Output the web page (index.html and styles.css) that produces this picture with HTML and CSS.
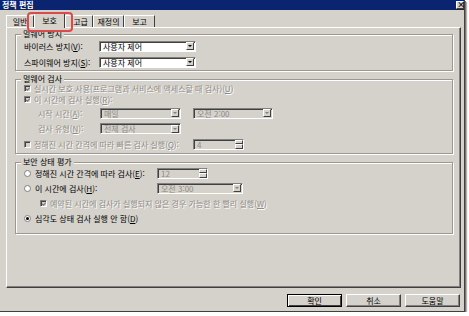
FILE: index.html
```html
<!DOCTYPE html>
<html lang="ko">
<head>
    <meta charset="UTF-8">
    <title>정책 편집</title>
    <link rel="stylesheet" href="styles.css">
</head>
<body>
    <div class="window">
        <div class="titlebar">
            <span class="title">정책 편집</span>
            <span class="close">×</span>
        </div>

        <div class="tabs">
            <div class="tab t-general">일반</div>
            <div class="tab active">보호</div>
            <div class="tab t-adv">고급</div>
            <div class="tab t-over">재정의</div>
            <div class="tab t-report">보고</div>
        </div>

        <div class="panel">
            <fieldset class="group g1">
                <legend>멀웨어 방지</legend>
                <div class="row h16">
                    <label class="cell w75">바이러스 방지(<u>V</u>):</label>
                    <div class="select w97"><span>사용자 제어</span><span class="drop"></span></div>
                </div>
                <div class="row h16">
                    <label class="cell w75">스파이웨어 방지(<u>S</u>):</label>
                    <div class="select w97"><span>사용자 제어</span><span class="drop"></span></div>
                </div>
            </fieldset>

            <fieldset class="group g2">
                <legend>멀웨어 검사</legend>
                <div class="row h10 off">
                    <span class="chk on"><svg viewBox="0 0 7 7"><path d="M1.3 3.3 L2.8 4.8 L5.6 1.8"/></svg></span>
                    <label>실시간 보호 사용(프로그램과 서비스에 액세스할 때 검사)(<u>U</u>)</label>
                </div>
                <div class="row h12 off">
                    <span class="chk on"><svg viewBox="0 0 7 7"><path d="M1.3 3.3 L2.8 4.8 L5.6 1.8"/></svg></span>
                    <label>이 시간에 검사 실행(<u>R</u>):</label>
                </div>
                <div class="row h16 off indent">
                    <label class="cell w62">시작 시간(<u>A</u>):</label>
                    <div class="select w81 dis"><span>매일</span><span class="drop"></span></div>
                    <div class="select w80 dis gap12"><span>오전 2:00</span><span class="drop"></span></div>
                </div>
                <div class="row h15 off indent">
                    <label class="cell w62">검사 유형(<u>N</u>):</label>
                    <div class="select w81 dis"><span>전체 검사</span><span class="drop"></span></div>
                </div>
                <div class="row h16 off">
                    <div class="cell w169">
                        <span class="chk"></span>
                        <label>정해진 시간 간격에 따라 빠른 검사 실행(<u>Q</u>):</label>
                    </div>
                    <div class="spin w51 dis"><span>4</span><span class="updown"><i></i><i></i></span></div>
                </div>
            </fieldset>

            <fieldset class="group g3">
                <legend>보안 상태 평가</legend>
                <div class="row h14">
                    <div class="cell w133">
                        <span class="radio"></span>
                        <label>정해진 시간 간격에 따라 검사(<u>E</u>):</label>
                    </div>
                    <div class="spin w51 dis"><span>12</span><span class="updown"><i></i><i></i></span></div>
                </div>
                <div class="row h16">
                    <div class="cell w133">
                        <span class="radio"></span>
                        <label>이 시간에 검사(<u>H</u>):</label>
                    </div>
                    <div class="select w86 dis"><span>오전 3:00</span><span class="drop"></span></div>
                </div>
                <div class="row h15 off indent2">
                    <span class="chk on"><svg viewBox="0 0 7 7"><path d="M1.3 3.3 L2.8 4.8 L5.6 1.8"/></svg></span>
                    <label>예약된 시간에 검사가 실행되지 않은 경우 가능한 한 빨리 실행(<u>W</u>)</label>
                </div>
                <div class="row h15">
                    <span class="radio on"></span>
                    <label>심각도 상태 검사 실행 안 함(<u>D</u>)</label>
                </div>
            </fieldset>
        </div>

        <div class="buttons">
            <button class="default">확인</button>
            <button>취소</button>
            <button>도움말</button>
        </div>
    </div>
</body>
</html>
```

FILE: styles.css
```css
body {
    margin: 0;
    background: #fff;
    font-family: "Noto Sans CJK KR", "DejaVu Sans", sans-serif;
    font-size: 8px;
    color: #000;
}
.window {
    width: 465px;
    height: 312px;
    box-sizing: border-box;
    background: #d5d2cc;
    border-right: 1px solid #404040;
    border-bottom: 1px solid #404040;
    box-shadow: 1px 1px 0 #7a7772, 2px 2px 1px #b5b2ad;
    display: flex;
    flex-direction: column;
}
.titlebar {
    height: 10px;
    background: #0b2470;
    display: flex;
    justify-content: space-between;
    align-items: center;
    padding: 0 0 0 2px;
}
.title {
    color: #fff;
    font-weight: bold;
    line-height: 10px;
}
.close {
    width: 8px;
    height: 8px;
    box-sizing: border-box;
    background: #d5d2cc;
    border: 1px solid;
    border-color: #fff #404040 #404040 #fff;
    font-size: 8px;
    line-height: 5px;
    text-align: center;
    font-weight: bold;
}

/* tabs */
.tabs {
    height: 17px;
    display: flex;
    align-items: flex-end;
    padding-left: 6px;
}
.tab {
    height: 12px;
    box-sizing: border-box;
    line-height: 11px;
    text-align: center;
    border-top: 1px solid #fff;
    border-left: 1px solid #fff;
    border-right: 1px solid #404040;
}
.t-general { width: 28px; }
.t-adv { width: 28px; padding-left: 3px; }
.t-over { width: 31px; }
.t-report { width: 31px; }
.tab.active {
    width: 31px;
    height: 15px;
    line-height: 13px;
    position: relative;
    margin-bottom: -1px;
    background: #d5d2cc;
    z-index: 1;
}
.tab.active::after {
    content: "";
    position: absolute;
    left: -8px;
    right: -9px;
    top: -2px;
    bottom: -4px;
    border: 2px solid #dc4b4b;
    border-radius: 4px;
}

/* panel */
.panel {
    width: 455px;
    height: 261px;
    box-sizing: border-box;
    margin-left: 6px;
    border: 1px solid;
    border-color: #fff #404040 #404040 #fff;
    box-shadow: inset -1px -1px 0 #808080;
    padding: 2px 0 0 8px;
}
.group {
    width: 438px;
    box-sizing: border-box;
    margin: 0 0 4px 0;
    padding: 0 0 0 8px;
    border: 1px solid #9c9891;
    box-shadow: 1px 1px 0 #fff, inset 1px 1px 0 #fff;
}
.group legend {
    padding: 0 2px;
    margin-left: -3px;
    line-height: 8px;
    background: #d5d2cc;
}
.g2 { padding-bottom: 1px; }
.g3 { padding-bottom: 7px; }

.row {
    display: flex;
    align-items: center;
}
.h10 { height: 10px; }
.h12 { height: 12px; }
.h14 { height: 14px; }
.h15 { height: 15px; }
.h16 { height: 16px; }
.indent { padding-left: 14px; }
.indent2 { padding-left: 16px; }
.cell {
    display: flex;
    align-items: center;
    flex-shrink: 0;
}
.w62 { width: 62px; }
.w75 { width: 75px; }
.w133 { width: 133px; }
.w169 { width: 169px; }
.off label,
.off .cell label {
    color: #8e8b85;
    text-shadow: 1px 1px 0 #fff;
}

/* inputs */
.select,
.spin {
    height: 11px;
    box-sizing: border-box;
    background: #fff;
    border: 1px solid;
    border-color: #808080 #fff #fff #808080;
    box-shadow: inset 1px 1px 0 #404040;
    display: flex;
    align-items: center;
    justify-content: space-between;
    padding-left: 3px;
    line-height: 9px;
}
.w51 { width: 51px; }
.w80 { width: 80px; }
.w81 { width: 81px; }
.w86 { width: 86px; }
.w97 { width: 97px; }
.gap12 { margin-left: 12px; }
.select.dis,
.spin.dis {
    background: #d5d2cc;
    color: #8e8b85;
}
.drop {
    width: 8px;
    height: 8px;
    margin-right: 1px;
    box-sizing: border-box;
    background: #d5d2cc;
    border: 1px solid;
    border-color: #fff #404040 #404040 #fff;
    display: flex;
    align-items: center;
    justify-content: center;
}
.drop::after {
    content: "";
    border-left: 2px solid transparent;
    border-right: 2px solid transparent;
    border-top: 2px solid #000;
}
.dis .drop::after {
    border-top-color: #808080;
}
.updown {
    width: 8px;
    height: 9px;
    display: flex;
    flex-direction: column;
}
.updown i {
    flex: 1;
    background: #d5d2cc;
    border: 1px solid;
    border-color: #fff #404040 #404040 #fff;
    box-sizing: border-box;
}

.chk {
    width: 7px;
    height: 7px;
    flex-shrink: 0;
    box-sizing: border-box;
    margin-right: 3px;
    background: #fff;
    border: 1px solid;
    border-color: #808080 #fff #fff #808080;
    box-shadow: inset 1px 1px 0 #404040;
}
.off .chk {
    background: #d5d2cc;
}
.chk svg {
    display: block;
    width: 6px;
    height: 6px;
}
.chk path {
    fill: none;
    stroke: #777;
    stroke-width: 1.3;
}
.radio {
    width: 7px;
    height: 7px;
    flex-shrink: 0;
    box-sizing: border-box;
    margin-right: 4px;
    border-radius: 50%;
    background: #fff;
    border: 1px solid #808080;
    display: flex;
    align-items: center;
    justify-content: center;
}
.radio.on::after {
    content: "";
    width: 3px;
    height: 3px;
    border-radius: 50%;
    background: #000;
}

/* bottom buttons */
.buttons {
    display: flex;
    justify-content: flex-end;
    gap: 4px;
    padding: 6px 4px 0 0;
}
.buttons button {
    width: 55px;
    height: 13px;
    padding: 0;
    font-family: inherit;
    font-size: 8px;
    line-height: 9px;
    background: #d5d2cc;
    border: 1px solid;
    border-color: #fff #404040 #404040 #fff;
    box-shadow: inset -1px -1px 0 #808080;
}
.buttons button.default {
    border-color: #000;
    box-shadow: inset 1px 1px 0 #fff, inset -1px -1px 0 #404040;
}
```
